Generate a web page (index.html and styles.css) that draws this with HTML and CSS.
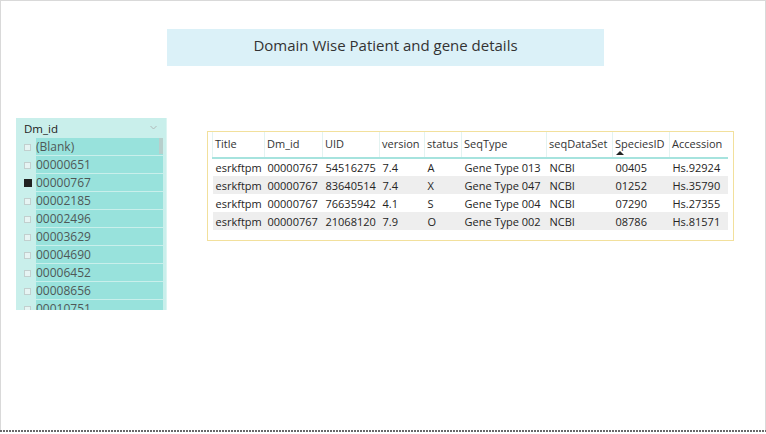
FILE: index.html
```html
<!DOCTYPE html>
<html>
<head>
<meta charset="utf-8">
<link rel="stylesheet" href="styles.css">
</head>
<body>
<div class="frame">
  <div class="title-box">Domain Wise Patient and gene details</div>
  <div class="content">
    <div class="slicer">
      <div class="slicer-head">
        <span>Dm_id</span>
        <svg class="chev" width="7" height="5" viewBox="0 0 7 5"><path d="M0.5 1 L3.5 4 L6.5 1" fill="none" stroke="#b0b8b8" stroke-width="1"/></svg>
      </div>
      <div class="slicer-list">
        <div class="scrollbar"></div>
        <div class="item"><span class="cb"></span><span class="lbl">(Blank)</span></div>
        <div class="item"><span class="cb"></span><span class="lbl">00000651</span></div>
        <div class="item"><span class="cb on"></span><span class="lbl">00000767</span></div>
        <div class="item"><span class="cb"></span><span class="lbl">00002185</span></div>
        <div class="item"><span class="cb"></span><span class="lbl">00002496</span></div>
        <div class="item"><span class="cb"></span><span class="lbl">00003629</span></div>
        <div class="item"><span class="cb"></span><span class="lbl">00004690</span></div>
        <div class="item"><span class="cb"></span><span class="lbl">00006452</span></div>
        <div class="item"><span class="cb"></span><span class="lbl">00008656</span></div>
        <div class="item"><span class="cb"></span><span class="lbl">00010751</span></div>
      </div>
    </div>
    <div class="table-card">
      <table class="grid">
        <colgroup>
          <col class="c1"><col class="c2"><col class="c3"><col class="c4"><col class="c5"><col class="c6"><col class="c7"><col class="c8"><col class="c9">
        </colgroup>
        <thead>
          <tr>
            <th>Title</th><th>Dm_id</th><th>UID</th><th>version</th><th>status</th><th>SeqType</th><th>seqDataSet</th><th class="sorted">SpeciesID<span class="arrow"></span></th><th>Accession</th>
          </tr>
        </thead>
        <tbody>
          <tr><td>esrkftpm</td><td>00000767</td><td>54516275</td><td>7.4</td><td>A</td><td>Gene Type 013</td><td>NCBI</td><td>00405</td><td>Hs.92924</td></tr>
          <tr class="alt"><td>esrkftpm</td><td>00000767</td><td>83640514</td><td>7.4</td><td>X</td><td>Gene Type 047</td><td>NCBI</td><td>01252</td><td>Hs.35790</td></tr>
          <tr><td>esrkftpm</td><td>00000767</td><td>76635942</td><td>4.1</td><td>S</td><td>Gene Type 004</td><td>NCBI</td><td>07290</td><td>Hs.27355</td></tr>
          <tr class="alt"><td>esrkftpm</td><td>00000767</td><td>21068120</td><td>7.9</td><td>O</td><td>Gene Type 002</td><td>NCBI</td><td>08786</td><td>Hs.81571</td></tr>
        </tbody>
      </table>
    </div>
  </div>
  <div class="dots"></div>
</div>
</body>
</html>
```
FILE: styles.css
```css
* { box-sizing: border-box; }
html, body { margin: 0; padding: 0; background: #fff; }
body { font-family: "Open Sans", "Noto Sans", sans-serif; color: #333; }

.frame {
  width: 766px;
  height: 432px;
  border-top: 1px solid #d9d9d9;
  border-left: 1px solid #d9d9d9;
  border-right: 1px solid #d9d9d9;
  padding-top: 28px;
  display: flex;
  flex-direction: column;
  align-items: flex-start;
}

.dots {
  margin-top: auto;
  margin-left: -1px;
  width: 766px;
  height: 2px;
  background: repeating-linear-gradient(to right, #6a6a6a 0 2px, transparent 2px 3px);
}

.title-box {
  margin-left: 166px;
  width: 437px;
  height: 37px;
  background: #dbf1f8;
  color: #333;
  font-size: 15px;
  line-height: 33px;
  text-align: center;
}

.content {
  display: flex;
  align-items: flex-start;
  margin-top: 52px;
  padding-left: 15px;
}

.slicer {
  width: 151px;
  height: 192px;
  background: #c9efeb;
  overflow: hidden;
  border-right: 1px solid #dcf5f2;
}

.slicer-head {
  height: 20px;
  display: flex;
  align-items: center;
  justify-content: space-between;
  padding: 0 9px 0 8px;
  font-size: 11.5px;
  color: #222;
}
.chev { margin-top: -2px; }

.slicer-list {
  position: relative;
  padding-right: 3px;
}
.scrollbar {
  position: absolute;
  right: 3px;
  top: 0;
  width: 4px;
  height: 16px;
  background: #b7cfcc;
}

.item {
  display: flex;
  align-items: center;
  height: 18px;
}
.cb {
  width: 7px;
  height: 7px;
  margin: 0 5px 0 8px;
  border: 1px solid #c2cfce;
  background: #e6f4f3;
  flex: none;
}
.cb.on {
  width: 8px;
  height: 8px;
  background: #222;
  border-color: #222;
  margin: 0 4px 0 8px;
}
.lbl {
  flex: 1;
  height: 17px;
  margin-bottom: 1px;
  background: #98e2dc;
  color: #4f5857;
  font-size: 12px;
  line-height: 17px;
}

.table-card {
  margin-left: 40px;
  margin-top: 13px;
  width: 527px;
  height: 110px;
  border: 1px solid #f2e09c;
  padding: 0 0 0 4px;
}

.grid {
  border-collapse: collapse;
  table-layout: fixed;
  width: 515px;
  font-size: 11px;
  color: #252423;
}
.c1 { width: 52px; }
.c2 { width: 58px; }
.c3 { width: 57px; }
.c4 { width: 45px; }
.c5 { width: 37px; }
.c6 { width: 85px; }
.c7 { width: 66px; }
.c8 { width: 57px; }
.c9 { width: 58px; }

.grid th {
  height: 26px;
  font-weight: normal;
  text-align: left;
  padding: 0 0 2px 2px;
  border-left: 1px solid #e3f3f1;
  border-bottom: 2px solid #a6e3de;
  white-space: nowrap;
  position: relative;
  color: #333;
}
.arrow {
  position: absolute;
  left: 3px;
  bottom: 2px;
  width: 0;
  height: 0;
  border-left: 4px solid transparent;
  border-right: 4px solid transparent;
  border-bottom: 4px solid #222;
}
.grid td {
  height: 18px;
  padding: 0 0 0 3px;
  white-space: nowrap;
  overflow: hidden;
}
.grid tr.alt td { background: #eeeeee; }
```
